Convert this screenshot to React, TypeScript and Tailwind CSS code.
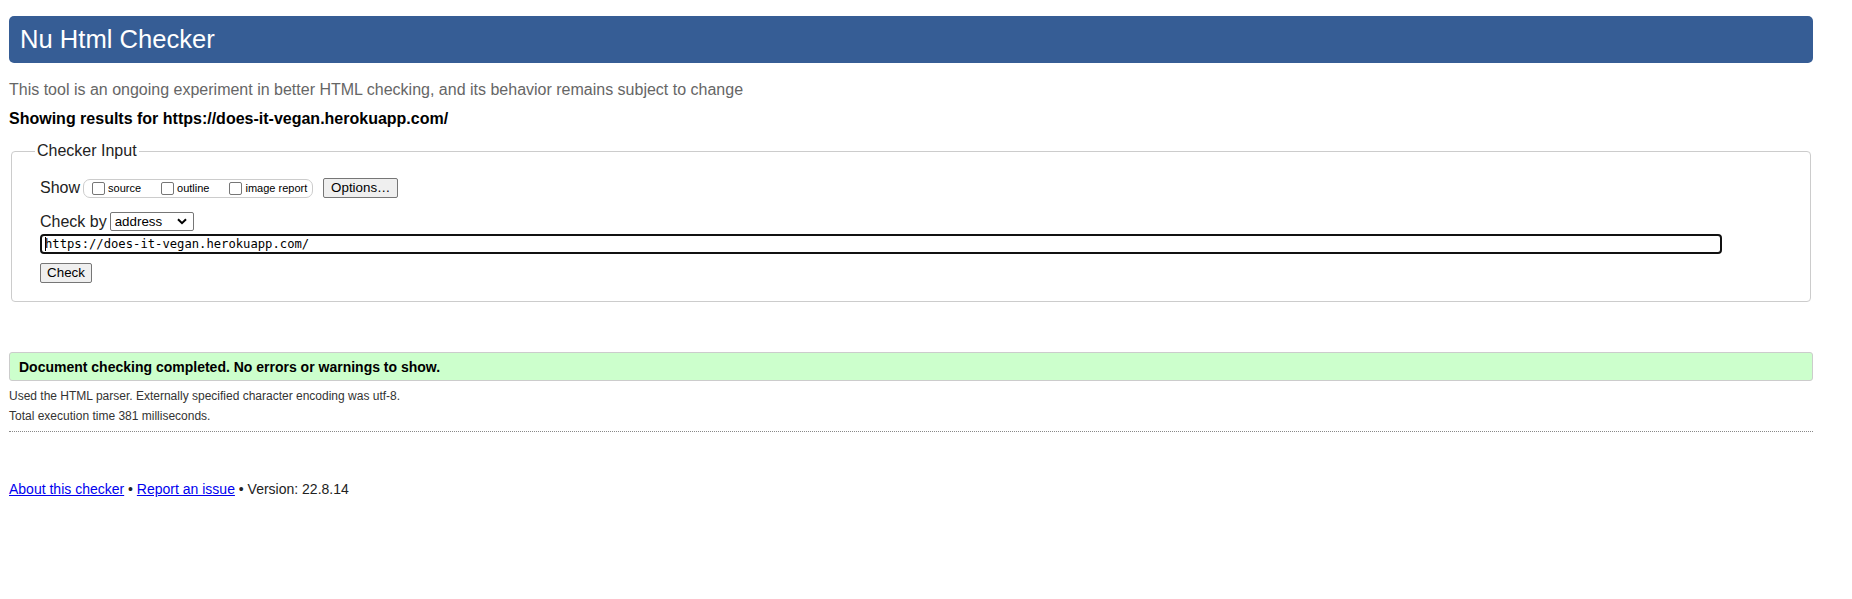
import React from "react";

const sans = "font-['Liberation_Sans',Arial,sans-serif]";

function Checkbox({ label, last }: { label: string; last?: boolean }) {
  return (
    <label className={`flex items-center ${last ? "" : "mr-[20px]"}`}>
      <span className="w-[13px] h-[13px] border border-[#767676] rounded-[2px] bg-white" />
      <span className="ml-[3px] text-[11px] leading-[13px] text-black">{label}</span>
    </label>
  );
}

function NativeButton({ children, className }: { children: React.ReactNode; className?: string }) {
  return (
    <button
      className={`h-[20px] border border-[#767676] rounded-[2px] bg-[#efefef] text-[13.33px] leading-[18px] text-black flex items-center justify-center ${className ?? ""}`}
    >
      {children}
    </button>
  );
}

export default function App() {
  return (
    <div className={`${sans} bg-white w-[1852px] h-[599px] pt-[16px] pl-[9px] text-black`}>
      <div className="w-[1804px]">
        {/* Title bar */}
        <div className="h-[47px] rounded-[5px] bg-[#365d95] flex items-center pl-[11px]">
          <h1 className="text-[25.6px] leading-none text-white font-normal">Nu Html Checker</h1>
        </div>

        <p className="mt-[18px] text-[16px] leading-[18px] text-[#666]">
          This tool is an ongoing experiment in better HTML checking, and its behavior remains subject to change
        </p>
        <p className="mt-[11px] text-[16px] leading-[18px] font-bold text-black">
          Showing results for https://does-it-vegan.herokuapp.com/
        </p>

        {/* Checker input form */}
        <fieldset className="mt-[14px] mx-[2px] border border-[#ccc] rounded-[4px]">
          <legend className="ml-[23px] px-[2px] text-[16px] leading-[18px] text-[#222]">Checker Input</legend>
          <div className="pl-[28px] pb-[18px]">
            <div className="mt-[17px] h-[22px] flex items-center">
              <span className="text-[16px] leading-[18px] text-[#222]">Show</span>
              <div className="ml-[3px] h-[19px] border border-[#ccc] rounded-[7px] flex items-center pl-[8px] pr-[5px]">
                <Checkbox label="source" />
                <Checkbox label="outline" />
                <Checkbox label="image report" last />
              </div>
              <NativeButton className="ml-[10px] w-[75px]">Options…</NativeButton>
            </div>

            <div className="mt-[13px] h-[19px] flex items-center">
              <span className="text-[16px] leading-[18px] text-[#222]">Check by</span>
              <div className="ml-[3px] w-[84px] h-[19px] border border-[#767676] rounded-[2px] bg-white flex items-center justify-between pl-[4px] pr-[6px]">
                <span className="text-[13.33px] leading-[16px] text-black">address</span>
                <svg width="10" height="7" viewBox="0 0 10 7" fill="none">
                  <path d="M1 1.2L5 5.2L9 1.2" stroke="#000" strokeWidth="2" />
                </svg>
              </div>
            </div>

            <div className="mt-[3px] w-[1682px] h-[20px] border-2 border-[#111] rounded-[4px] bg-white flex items-center pl-[3px]">
              <span className="w-[1px] h-[14px] bg-black -mr-[1px]" />
              <span className="font-['DejaVu_Sans_Mono',monospace] text-[12.2px] leading-[14px] text-black">
                https://does-it-vegan.herokuapp.com/
              </span>
            </div>

            <NativeButton className="mt-[9px] w-[52px]">Check</NativeButton>
          </div>
        </fieldset>

        {/* Result */}
        <div className="mt-[50px] h-[29px] border border-[#ccc] rounded-[3px] bg-[#ccffcc] flex items-center pl-[9px]">
          <p className="text-[14px] leading-[16px] font-bold text-black">
            Document checking completed. No errors or warnings to show.
          </p>
        </div>
        <p className="mt-[8px] text-[12px] leading-[14px] text-[#333]">
          Used the HTML parser. Externally specified character encoding was utf-8.
        </p>
        <p className="mt-[6px] text-[12px] leading-[14px] text-[#333]">Total execution time 381 milliseconds.</p>
        <div className="mt-[8px] border-t border-dotted border-[#888]" />

        {/* Footer */}
        <p className="mt-[49px] text-[14px] leading-[16px] text-[#222]">
          <a href="#" className="text-[#0000ee] underline">About this checker</a>
          {" • "}
          <a href="#" className="text-[#0000ee] underline">Report an issue</a>
          {" • Version: 22.8.14"}
        </p>
      </div>
    </div>
  );
}
